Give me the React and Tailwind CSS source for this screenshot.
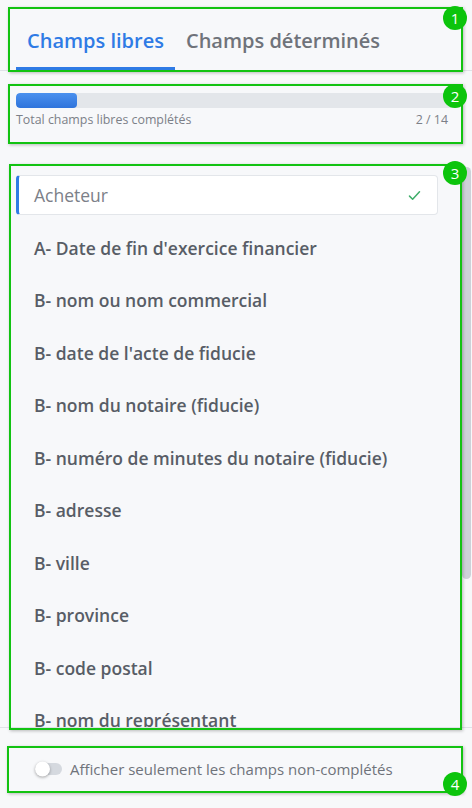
import React, { useState } from 'react';

const fields = [
    "A- Date de fin d'exercice financier",
    'B- nom ou nom commercial',
    "B- date de l'acte de fiducie",
    'B- nom du notaire (fiducie)',
    'B- numéro de minutes du notaire (fiducie)',
    'B- adresse',
    'B- ville',
    'B- province',
    'B- code postal',
    'B- nom du représentant',
];

const Marker = ({ n, box, badge }) => (
    <>
        <div className={`pointer-events-none absolute border-2 border-[#12c312] shadow-[1px_1px_3px_rgba(0,0,0,0.25)] ${box}`}></div>
        <div className={`pointer-events-none absolute flex h-[24px] w-[24px] items-center justify-center rounded-full bg-[#0cc40c] text-[15px] text-white ${badge}`}>
            {n}
        </div>
    </>
);

export default function App() {
    const [activeTab, setActiveTab] = useState(0);
    const [onlyOpen, setOnlyOpen] = useState(false);

    return (
        <div
            className="relative flex h-[808px] w-full flex-col overflow-hidden bg-[#f7f8fa]"
            style={{ fontFamily: '"Open Sans", "Noto Sans", sans-serif' }}
        >
            {/* Onglets */}
            <div className="flex h-[71px] shrink-0 items-end border-b border-[#dfe2e7] px-4">
                {['Champs libres', 'Champs déterminés'].map((label, i) => (
                    <button
                        key={label}
                        onClick={() => setActiveTab(i)}
                        className={`flex h-[56px] items-center border-b-[3px] px-[11px] pt-[1px] text-[20px] font-semibold ${
                            activeTab === i ? 'border-[#2f7be5] text-[#2f7be5]' : 'border-transparent text-[#6f737a]'
                        }`}
                    >
                        {label}
                    </button>
                ))}
            </div>

            {/* Progression */}
            <div className="shrink-0 pl-4 pr-4 pt-[22px]">
                <div className="h-[15px] w-full overflow-hidden rounded-[4px] bg-[#e3e6ea]">
                    <div className="h-full w-[61px] rounded-[4px] bg-gradient-to-b from-[#4a90ee] to-[#2f74dc]"></div>
                </div>
                <div className="mt-[3px] flex items-center justify-between pr-[8px] text-[12.4px] leading-[17px] text-[#7c8088]">
                    <span>Total champs libres complétés</span>
                    <span>2 / 14</span>
                </div>
            </div>

            {/* Liste des champs */}
            <div className="relative mt-[37px] h-[563px] shrink-0 overflow-hidden border-b border-[#dfe2e7]">
                <div className="pl-4 pr-[34px] pt-[4px]">
                    <div className="flex h-[52.5px] items-center">
                        <div className="flex h-[40px] w-full items-center justify-between rounded-[4px] border border-l-[3px] border-[#e3e6ea] border-l-[#2f7be5] bg-white pl-[15px] pr-[15px]">
                            <span className="text-[17.5px] text-[#7c8088]">Acheteur</span>
                            <svg className="h-[15px] w-[15px] text-[#3fae6a]" fill="none" viewBox="0 0 24 24" stroke="currentColor">
                                <path strokeLinecap="round" strokeLinejoin="round" strokeWidth={2.4} d="M4 13l5 5L20 6" />
                            </svg>
                        </div>
                    </div>
                    {fields.map((f) => (
                        <div key={f} className="flex h-[52.5px] items-center pl-[18px] text-[17.5px] font-semibold text-[#585d66]">
                            {f}
                        </div>
                    ))}
                </div>
                <div className="absolute right-[1px] top-[2px] h-[412px] w-[9px] rounded-full bg-[#cdd1d8]"></div>
            </div>

            {/* Filtre */}
            <div className="flex flex-1 items-center pl-[35px] pt-[2px]">
                <button
                    onClick={() => setOnlyOpen(!onlyOpen)}
                    className="relative mr-[8px] h-[12px] w-[27px] rounded-full bg-[#d5d9df]"
                >
                    <span className="absolute left-0 top-1/2 h-[15px] w-[15px] -translate-y-1/2 rounded-full bg-white shadow-[0_1px_3px_rgba(0,0,0,0.35)]"></span>
                </button>
                <span className="text-[15px] text-[#6f737a]">Afficher seulement les champs non-complétés</span>
            </div>

            <Marker n="1" box="left-[8px] top-[7px] h-[65px] w-[455px]" badge="left-[443px] top-[6px]" />
            <Marker n="2" box="left-[8px] top-[84px] h-[60px] w-[455px]" badge="left-[443px] top-[84px]" />
            <Marker n="3" box="left-[9px] top-[164px] h-[566px] w-[453px]" badge="left-[443px] top-[161px]" />
            <Marker n="4" box="left-[7px] top-[746px] h-[47px] w-[456px]" badge="left-[443px] top-[772px]" />
        </div>
    );
}
